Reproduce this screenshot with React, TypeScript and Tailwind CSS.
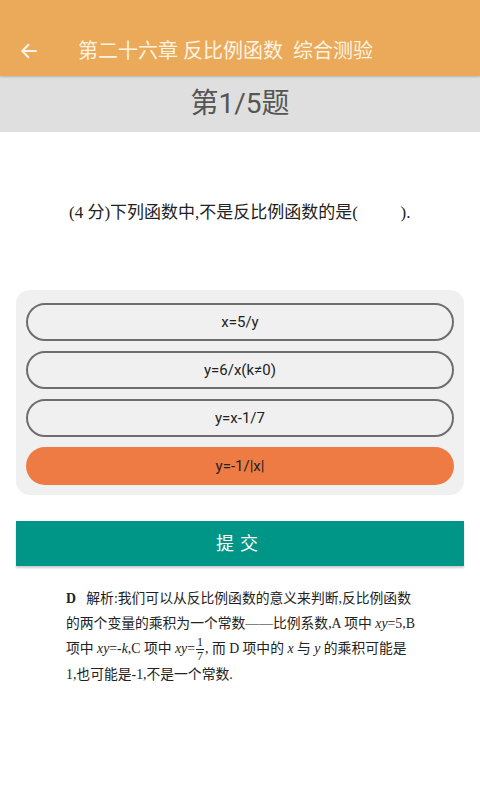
import React from "react";

const opts = ["x=5/y", "y=6/x(k≠0)", "y=x-1/7", "y=-1/|x|"];

export default function App() {
  const serif = { fontFamily: '"Liberation Serif", "Noto Sans CJK SC", serif' } as React.CSSProperties;
  return (
    <div className="w-[480px] h-[800px] bg-white flex flex-col" style={{ fontFamily: 'Roboto, "Noto Sans CJK SC", sans-serif' }}>
      <div className="h-[76px] bg-[#eaaa59] flex items-end pb-[13px] shadow-[0_1px_2px_rgba(0,0,0,0.2)] relative z-10">
        <div className="w-[78px] pl-[20px] flex items-center h-[24px]">
          <svg width="18" height="18" viewBox="0 0 24 24" fill="none" stroke="#fdf5ea" strokeWidth="2.6" strokeLinecap="square">
            <path d="M21 12H4" />
            <path d="M11 4l-8 8 8 8" strokeLinejoin="miter" />
          </svg>
        </div>
        <div className="text-[20px] leading-[24px] text-[#fdf3e3]">第二十六章 反比例函数&nbsp;&nbsp;综合测验</div>
      </div>
      <div className="h-[56px] bg-[#dfdfdf] flex items-center justify-center text-[28px] text-[#555555]">第1/5题</div>
      <div className="h-[158px] flex items-start pt-[70px] pl-[69px]">
        <div className="text-[17px] leading-[22px] text-[#222]" style={serif}>
          (4 分)下列函数中,不是反比例函数的是(&nbsp;&nbsp;&nbsp;&nbsp;&nbsp;&nbsp;&nbsp;&nbsp;&nbsp;&nbsp;).
        </div>
      </div>
      <div className="mx-[16px] bg-[#f0f0f0] rounded-[14px] px-[10px] pt-[13px] pb-[10px] flex flex-col gap-[10px]">
        {opts.map((o, i) =>
          i === 3 ? (
            <div key={o} className="h-[38px] rounded-full bg-[#ee7b44] flex items-center justify-center text-[15px] text-[#222]">{o}</div>
          ) : (
            <div key={o} className="h-[38px] rounded-full border-2 border-[#6e6e6e] flex items-center justify-center text-[15px] text-[#222]">{o}</div>
          )
        )}
      </div>
      <div className="mx-[16px] mt-[26px] h-[45px] bg-[#009687] flex items-center justify-center text-white text-[18px] tracking-[6px] shadow-[0_2px_2px_rgba(0,0,0,0.2)]">提交</div>
      <div className="pl-[66px] pr-[50px] pt-[21px] text-[13.8px] text-[#222] leading-[24.5px]" style={serif}>
        <div><b>D</b>&nbsp;&nbsp;&nbsp;解析:我们可以从反比例函数的意义来判断,反比例函数</div>
        <div>的两个变量的乘积为一个常数——比例系数,A 项中 <i>xy</i>=5,B</div>
        <div className="flex items-center">
          <span>项中 <i>xy</i>=-<i>k</i>,C 项中 <i>xy</i>=</span>
          <span className="inline-flex flex-col items-center text-[12px] leading-[13px] mx-[1px]">
            <span>1</span>
            <span className="border-t border-[#222] px-[1px]">7</span>
          </span>
          <span>,&nbsp;而 D 项中的 <i>x</i> 与 <i>y</i> 的乘积可能是</span>
        </div>
        <div>1,也可能是-1,不是一个常数.</div>
      </div>
    </div>
  );
}
